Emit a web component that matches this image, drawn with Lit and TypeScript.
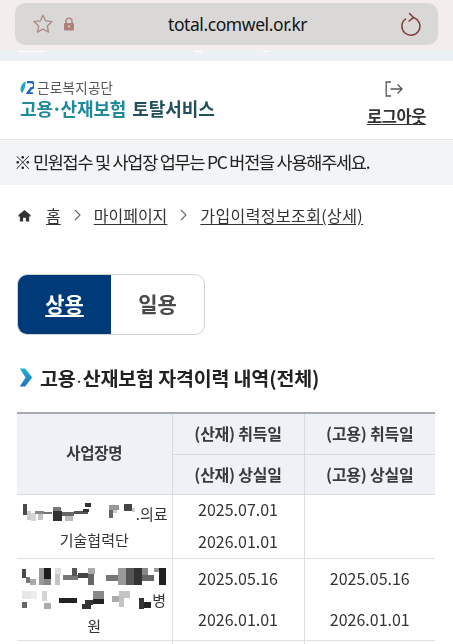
import { LitElement, html, css, svg } from "lit";
import { customElement } from "lit/decorators.js";

type R = [number, number, number, number, string];

const m1: R[] = [
  [0,1,4,11,"#4a4a4a"],[4,8,4,9,"#ccc"],[8,10,5,8,"#d5d5d5"],[12,8,9,3,"#888"],[15,11,5,6,"#c4c4c4"],
  [20,9,9,2,"#777"],[30,4,8,4,"#777"],[30,8,9,10,"#333"],[39,9,12,4,"#666"],[42,13,8,5,"#bbb"],
  [51,8,14,3,"#555"],[60,6,6,3,"#333"],[62,0,6,4,"#333"],[86,2,10,5,"#999"],[86,7,4,8,"#666"],[90,7,4,3,"#ccc"],
  [101,1,8,7,"#444"],[109,5,3,4,"#ccc"],
];
const m2: R[] = [
  [0,1,4,9,"#4a4a4a"],[4,9,4,6,"#777"],[8,11,6,6,"#aaa"],[17,0,5,17,"#999"],[22,0,7,11,"#1c1c1c"],[22,11,7,6,"#888"],
  [33,0,6,6,"#ddd"],[33,6,5,11,"#c4c4c4"],[41,7,15,5,"#777"],[50,0,5,8,"#555"],[56,5,10,5,"#444"],[66,0,7,6,"#aaa"],[66,6,6,11,"#666"],
  [84,7,12,6,"#777"],[96,0,8,17,"#999"],[104,0,8,17,"#555"],[112,0,8,17,"#333"],[120,0,6,7,"#888"],[120,7,12,6,"#666"],[132,0,5,4,"#999"],[137,0,7,17,"#222"],
];
const m3: R[] = [
  [0,0,9,8,"#e6e6e6"],[0,11,5,6,"#666"],[9,0,6,8,"#eee"],[20,0,5,10,"#d4d4d4"],[22,12,7,6,"#aaa"],
  [37,7,18,5,"#222"],[63,9,8,5,"#333"],[60,13,9,5,"#333"],[71,0,11,8,"#888"],[71,8,11,5,"#222"],
  [90,5,8,6,"#aaa"],[97,0,11,7,"#c4c4c4"],[97,7,5,9,"#c4c4c4"],[117,7,5,11,"#333"],[122,11,7,6,"#222"],
];

const mosaic = (w: number, h: number, rects: R[], cls: string, dx = 0) => html`<svg class="mosaic ${cls}" width=${w} height=${h} viewBox="0 0 ${w} ${h}">
  <g transform="translate(${dx} 0)">${rects.map(([x, y, rw, rh, f]) => svg`<rect x=${x} y=${y} width=${rw} height=${rh} fill=${f}></rect>`)}</g>
</svg>`;

@customElement("app-root")
export class AppRoot extends LitElement {
  static styles = css`
    :host {
      display: block;
      width: 453px;
      height: 644px;
      overflow: hidden;
      background: #fff;
      font-family: "Noto Sans CJK KR", "Noto Sans", sans-serif;
      color: #222;
    }
    .page { filter: blur(0.35px); }
    .chrome { background: #f3eeeb; padding: 3px 15px 5px; height: 50px; box-sizing: border-box; }
    .pill {
      height: 42px; background: #d9d8d6; border-radius: 10px; display: grid;
      grid-template-columns: 136px auto 1fr; align-items: center; padding: 0 16px 0 17px;
    }
    .pill-left { display: flex; align-items: center; gap: 9px; }
    .url { font-family: "Noto Sans", sans-serif; font-size: 17.5px; color: #141414; letter-spacing: -0.42px; }
    .pill-right { display: flex; justify-content: flex-end; }
    .strip {
      height: 11px; background-color: #edf1f4;
      background-image: linear-gradient(#fff, #fff), linear-gradient(#fff, #fff), linear-gradient(#fff, #fff);
      background-repeat: no-repeat;
      background-size: 26px 1px, 8px 1px, 5px 1px;
      background-position: 18px 1px, 194px 1px, 263px 1px;
    }
    .header {
      height: 79px; box-sizing: border-box; padding: 18px 27px 0 20px; display: flex; justify-content: space-between;
      border-bottom: 1px solid #e4e6e8;
    }
    .logo-top { display: flex; align-items: center; gap: 3px; font-size: 13.5px; line-height: 17px; color: #555; letter-spacing: 0.3px; }
    .logo-main { font-size: 18px; font-weight: 700; line-height: 24px; color: #1f8a9c; letter-spacing: -0.1px; white-space: nowrap; }
    .logo-main .dot { margin: 0 -1.5px; }
    .logo-main .dark { color: #21505c; margin-left: 2px; }
    .logout { display: flex; flex-direction: column; align-items: center; margin-top: 2px; }
    .logout svg { margin-right: 5px; }
    .logout a { font-size: 16.5px; font-weight: 700; line-height: 24px; margin-top: 7px; color: #333; text-decoration: underline; white-space: nowrap; letter-spacing: -0.4px; }
    .notice {
      height: 45px; box-sizing: border-box; background: #f2f4f6; padding: 0 14px 3px; display: flex; align-items: center;
      font-size: 17.5px; letter-spacing: -1.25px; color: #222; white-space: nowrap;
    }
    .crumbs { display: flex; align-items: center; height: 60px; padding: 0 18px; font-size: 16px; color: #333; white-space: nowrap; }
    .crumbs a { color: #333; text-decoration: underline; text-underline-offset: 2px; }
    .crumbs a.last { letter-spacing: 0.4px; }
    .crumbs svg.home { margin-right: 15px; }
    .crumbs svg.sep { margin: 0 13px; }
    .tabs {
      margin: 29px 0 0 17px; width: 188px; height: 61px; box-sizing: border-box; display: flex;
      border: 1px solid #d2d2d2; border-radius: 10px; overflow: hidden; font-size: 21px; font-weight: 700;
    }
    .tab { display: flex; align-items: center; justify-content: center; padding-bottom: 3px; box-sizing: border-box; }
    .tab.on { width: 93px; background: #003a79; color: #fff; text-decoration: underline; text-underline-offset: 3px; }
    .tab.off { flex: 1; color: #4a4a4a; }
    .title { display: flex; align-items: center; gap: 7px; margin: 25px 0 0 19px; height: 34px; font-size: 19.5px; font-weight: 700; color: #222; letter-spacing: -0.15px; white-space: nowrap; }
    .title .dot { font-size: 12px; letter-spacing: 0; }
    table {
      margin: 18px 0 0 17px; width: 418px; table-layout: fixed; border-collapse: collapse; font-size: 16px; color: #333;
      border-top: 2px solid #a9a9b5; text-align: center;
    }
    col.c1 { width: 155px; } col.c2 { width: 132px; } col.c3 { width: 131px; }
    th { background: #eef1f6; font-weight: 700; height: 41px; box-sizing: border-box; padding: 0 0 1px; border-bottom: 1px solid #d6dbe1; border-left: 1px solid #d6dbe1; color: #3a3a3a; letter-spacing: -0.25px; }
    tr.h2 th { height: 40px; }
    th.name { border-left: 0; padding-bottom: 3px; font-size: 15.5px; }
    td { padding: 0 0 2px; border-left: 1px solid #dcdfe3; height: 32px; box-sizing: border-box; }
    td.name { border-left: 0; line-height: 25.5px; padding: 3px 2px 2px; border-bottom: 1px solid #dcdfe3; font-size: 15px; white-space: nowrap; }
    tr.end td { border-bottom: 1px solid #dcdfe3; }
    .mosaic { filter: blur(0.5px); }
    .v1 { vertical-align: -2px; }
    .v2 { vertical-align: -4.5px; }
    .v3 { vertical-align: -2.5px; }
  `;

  render() {
    return html`
      <div class="page">
      <div class="chrome">
        <div class="pill">
          <div class="pill-left">
            <svg width="22" height="22" viewBox="0 0 24 24" fill="none" stroke="#a98a82" stroke-width="1.4" stroke-linejoin="round"><path d="M12 2.500l2.900 6.200 6.800.8-5 4.600 1.300 6.700L12 17.500l-6 3.300 1.300-6.700-5-4.600 6.800-.8z"/></svg>
            <svg width="12" height="14" viewBox="0 0 12 14"><path d="M3 6V4.200a3 3 0 0 1 6 0V6" fill="none" stroke="#b08a85" stroke-width="1.600"/><rect x="1" y="6" width="10" height="7.500" rx="1.200" fill="#ad8079"/><circle cx="6" cy="9.500" r="1.100" fill="#e0d0cc"/></svg>
          </div>
          <div class="url">total.comwel.or.kr</div>
          <div class="pill-right">
            <svg width="22" height="24" viewBox="0 0 22 24" fill="none" stroke="#7c3d33" stroke-width="1.500" stroke-linecap="round" stroke-linejoin="round"><path d="M13.500 5.600A9 9 0 1 1 5.500 7"/><path d="M9.500 1.500l4 4.100-4.500 3.400"/></svg>
          </div>
        </div>
      </div>
      <div class="strip"></div>
      <div class="header">
        <div>
          <div class="logo-top">
            <svg width="14" height="13" viewBox="0 0 14 13"><path d="M0.500 8C1 4 3 1.500 5.500 0.500 6 4 4.500 9 2 12 1 11.500 0.500 10 0.500 8z" fill="#22a6c9"/><path d="M7 1h4a2.700 2.700 0 0 1 0 6.500L7.500 12.500H13" fill="none" stroke="#1b66c4" stroke-width="2.400"/></svg>
            근로복지공단
          </div>
          <div class="logo-main">고용<span class="dot">·</span>산재보험 <span class="dark">토탈서비스</span></div>
        </div>
        <div class="logout">
          <svg width="18" height="16" viewBox="0 0 18 16" fill="none" stroke="#555" stroke-width="1.300"><path d="M6 1H1.200v14H6"/><path d="M5.500 8H17M12.500 3.500L17 8l-4.500 4.500"/></svg>
          <a>로그아웃</a>
        </div>
      </div>
      <div class="notice">※ 민원접수 및 사업장 업무는 PC 버전을 사용해주세요.</div>
      <nav class="crumbs">
        <svg class="home" width="13" height="13" viewBox="0 0 14 13"><path d="M7 0.500L0.500 6v1.500H2V13h3.500V9h3v4H12V7.500h1.500V6z" fill="#333"/></svg>
        <a>홈</a>
        <svg class="sep" width="7" height="12" viewBox="0 0 7 12" fill="none" stroke="#666" stroke-width="1.100"><path d="M1 1l5 5-5 5"/></svg>
        <a>마이페이지</a>
        <svg class="sep" width="7" height="12" viewBox="0 0 7 12" fill="none" stroke="#666" stroke-width="1.100"><path d="M1 1l5 5-5 5"/></svg>
        <a class="last">가입이력정보조회(상세)</a>
      </nav>
      <div class="tabs">
        <div class="tab on">상용</div>
        <div class="tab off">일용</div>
      </div>
      <div class="title">
        <svg width="14" height="19" viewBox="0 0 14 20"><defs><linearGradient id="g" x1="0" y1="0" x2="0" y2="1"><stop offset="0" stop-color="#1cb4cf"/><stop offset="1" stop-color="#1f6fc0"/></linearGradient></defs><path d="M0.500 0.500h5.500L13.500 10 6 19.500H0.500L6.500 10z" fill="url(#g)"/></svg>
        <span>고용<span class="dot">·</span>산재보험 자격이력 내역(전체)</span>
      </div>
      <table>
        <colgroup><col class="c1" /><col class="c2" /><col class="c3" /></colgroup>
        <thead>
          <tr><th class="name" rowspan="2">사업장명</th><th>(산재) 취득일</th><th>(고용) 취득일</th></tr>
          <tr class="h2"><th>(산재) 상실일</th><th>(고용) 상실일</th></tr>
        </thead>
        <tbody>
          <tr><td class="name" rowspan="2">${mosaic(115, 19, m1, "v1", 2)}.의료<br />기술협력단</td><td>2025.07.01</td><td></td></tr>
          <tr class="end"><td>2026.01.01</td><td></td></tr>
          <tr><td class="name" rowspan="2">${mosaic(144, 17, m2, "v2")}<br />${mosaic(130, 18, m3, "v3")}병<br />원</td><td>2025.05.16</td><td>2025.05.16</td></tr>
          <tr class="end"><td>2026.01.01</td><td>2026.01.01</td></tr>
          <tr><td class="name"></td><td></td><td></td></tr>
        </tbody>
      </table>
      </div>
    `;
  }
}
